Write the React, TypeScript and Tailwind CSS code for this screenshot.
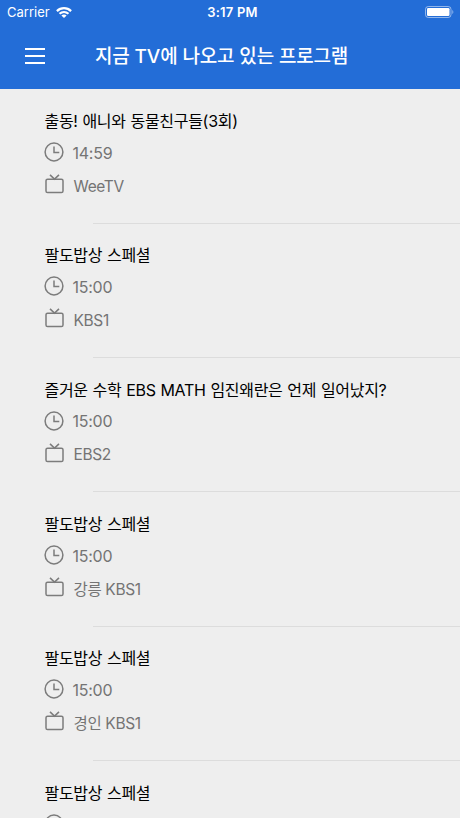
type Program = {
  title: string;
  time: string;
  channel: string;
};

const programs: Program[] = [
  { title: '출동! 애니와 동물친구들(3회)', time: '14:59', channel: 'WeeTV' },
  { title: '팔도밥상 스페셜', time: '15:00', channel: 'KBS1' },
  { title: '즐거운 수학 EBS MATH 임진왜란은 언제 일어났지?', time: '15:00', channel: 'EBS2' },
  { title: '팔도밥상 스페셜', time: '15:00', channel: '강릉 KBS1' },
  { title: '팔도밥상 스페셜', time: '15:00', channel: '경인 KBS1' },
  { title: '팔도밥상 스페셜', time: '15:00', channel: 'KBS1' },
];

function WifiIcon() {
  return (
    <svg className="h-[11px] w-4" viewBox="0 0 16 11" fill="none" stroke="white" strokeWidth="2.2">
      <path d="M0.9 4.1C4.9 0.2 11.1 0.2 15.1 4.1" />
      <path d="M3.5 6.8C6.1 4.4 9.9 4.4 12.5 6.8" />
      <path d="M8 11L5.4 8.4C6.9 7.1 9.1 7.1 10.6 8.4Z" fill="white" stroke="none" />
    </svg>
  );
}

function BatteryIcon() {
  return (
    <svg className="h-3 w-[29px]" viewBox="0 0 29 12" fill="none">
      <rect x="0.5" y="0.5" width="25.5" height="11" rx="2.8" stroke="white" strokeOpacity="0.5" />
      <rect x="2" y="2" width="22.5" height="8" rx="1.3" fill="white" />
      <path d="M27.3 4V8C28.7 7.4 28.7 4.6 27.3 4Z" fill="white" fillOpacity="0.5" />
    </svg>
  );
}

function ClockIcon() {
  return (
    <svg className="size-5" viewBox="0 0 20 20" fill="none" stroke="#7c7c7c" strokeWidth="1.5">
      <circle cx="10" cy="10" r="8.9" />
      <path d="M10 4.5V10.5H15.3" />
    </svg>
  );
}

function TvIcon() {
  return (
    <svg className="size-5" viewBox="0 0 20 20" fill="none" stroke="#7c7c7c" strokeWidth="1.5">
      <rect x="2" y="5.2" width="17" height="13.3" rx="1.6" />
      <path d="M6 0.9L10.5 5.1L15 0.9" />
    </svg>
  );
}

function StatusBar() {
  return (
    <div className="grid h-6 grid-cols-3 items-center pl-[7px] pr-[6px] text-[13px] leading-6">
      <div className="flex items-center gap-[6px]">
        <span>Carrier</span>
        <WifiIcon />
      </div>
      <span className="pl-1 text-center font-semibold tracking-[0.2px]">3:17 PM</span>
      <div className="flex justify-end">
        <BatteryIcon />
      </div>
    </div>
  );
}

function ProgramRow({ title, time, channel }: Program) {
  return (
    <li className="h-[134.35px] shrink-0">
      <div className="flex h-full flex-col pl-11 pt-5">
        <h2 className="h-6 whitespace-nowrap pl-[0.5px] text-[16px] leading-6 tracking-[-0.3px] text-black [word-spacing:0.6px]">
          {title}
        </h2>
        <div className="mt-[9px] flex h-5 items-center gap-[8.5px] text-[16px] leading-5 tracking-[-0.25px] text-[#747474]">
          <ClockIcon />
          <span className="pt-px">{time}</span>
        </div>
        <div className="mt-[12px] flex h-5 items-center gap-[9.5px] text-[15.5px] leading-5 tracking-[-0.35px] text-[#747474]">
          <TvIcon />
          <span className="pt-[5px]">{channel}</span>
        </div>
        <div className="relative top-[0.3px] ml-[49px] mt-auto h-px bg-[#dcdcdc]" />
      </div>
    </li>
  );
}

export default function App() {
  return (
    <div className="flex h-[818px] w-[460px] flex-col overflow-hidden bg-[#eeeeee] font-['Inter','Noto_Sans_CJK_KR',sans-serif]">
      <header className="h-[89px] shrink-0 bg-[#236dd7] text-white">
        <StatusBar />
        <div className="flex h-16 items-center pl-[25px]">
          <button className="flex w-5 flex-col gap-[5px]" aria-label="메뉴">
            <span className="h-[2px] w-full bg-white" />
            <span className="h-[2px] w-full bg-white" />
            <span className="h-[2px] w-full bg-white" />
          </button>
          <h1 className="ml-[50px] whitespace-nowrap pt-[2px] text-[19px] font-medium leading-7 tracking-[-0.15px]">
            지금 TV에 나오고 있는 프로그램
          </h1>
        </div>
      </header>
      <ul className="flex min-h-0 flex-1 flex-col overflow-hidden">
        {programs.map((program, i) => (
          <ProgramRow key={i} {...program} />
        ))}
      </ul>
    </div>
  );
}
